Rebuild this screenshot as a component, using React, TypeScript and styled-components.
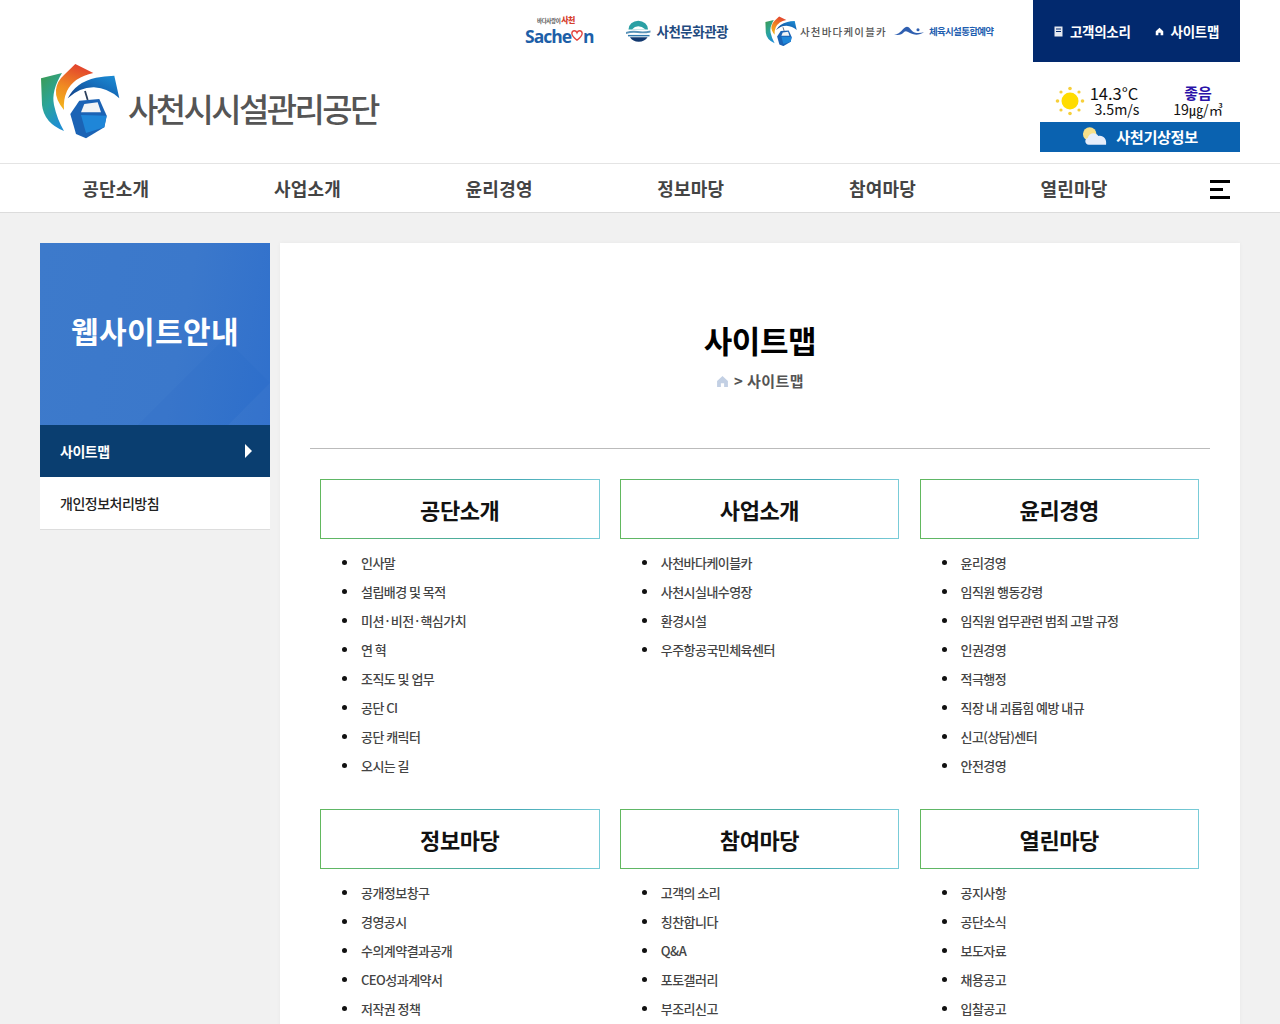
import React from "react";
import styled, {createGlobalStyle} from "styled-components";

const GlobalStyle = createGlobalStyle`
  html, body {
    margin: 0;
    padding: 0;
    height: 1024px;
    overflow: hidden;
    background: #f1f1f1;
    font-family: "Noto Sans CJK KR", "Noto Sans", sans-serif;
  }
  * { box-sizing: border-box; }
  ul { list-style: none; margin: 0; padding: 0; }
`

const Header = styled.header`
  background: #fff;
  height: 163px;`
const TopRow = styled.div`
  display: flex;
  justify-content: flex-end;
  align-items: stretch;
  height: 62px;
  padding-right: 40px;`
const TopLink = styled.a<{ $gap: number, $width: number }>`
  display: flex;
  align-items: center;
  width: ${p => p.$width}px;
  margin-right: ${p => p.$gap}px;
  white-space: nowrap;`
const SachonMark = styled.div`
  position: relative;
  font-family: "Open Sans", sans-serif;
  font-size: 17.5px;
  font-weight: 700;
  letter-spacing: -1px;
  color: #1d5fa8;
  display: flex;
  align-items: center;
  padding-top: 9px;`
const SachonTag = styled.span`
  position: absolute;
  top: -1px;
  left: 12px;
  font-family: "Noto Sans CJK KR", sans-serif;
  font-size: 5.5px;
  letter-spacing: -0.4px;
  color: #555;
  b { color: #d6402c; font-size: 8px; }`
const CultureText = styled.span`
  font-size: 13.5px;
  font-weight: 700;
  letter-spacing: -0.5px;
  color: #1f4a80;
  margin-left: 5px;`
const CableText = styled.span`
  font-size: 10.5px;
  font-weight: 500;
  letter-spacing: 1.2px;
  color: #555;
  margin-left: 3px;`
const SportsText = styled.span`
  font-size: 9.5px;
  font-weight: 700;
  letter-spacing: -0.7px;
  color: #1e5eb0;
  margin-left: 4px;`
const QuickBox = styled.div`
  display: flex;
  align-items: center;
  width: 207px;
  padding: 0 0 0 21px;
  background: #02296e;`
const QuickLink = styled.a<{ $gap: number }>`
  display: flex;
  align-items: center;
  gap: 7px;
  margin-right: ${p => p.$gap}px;
  color: #fff;
  font-size: 13.5px;
  font-weight: 700;
  letter-spacing: -0.3px;
  white-space: nowrap;`

const LogoRow = styled.div`
  display: flex;
  justify-content: space-between;
  align-items: flex-end;
  height: 101px;
  padding: 0 40px 11px;`
const Logo = styled.a`
  display: flex;
  align-items: center;
  gap: 8px;
  margin-bottom: 13px;`
const LogoText = styled.span`
  margin-top: 14px;
  font-size: 33px;
  line-height: 44px;
  font-weight: 500;
  letter-spacing: -2.6px;
  color: #555;
  white-space: nowrap;`
const Weather = styled.div`
  width: 200px;`
const WeatherInfo = styled.div`
  display: flex;
  align-items: center;
  height: 37px;
  padding: 0 0 6px 15px;`
const Readings = styled.div<{ $width: number, $left?: number }>`
  display: flex;
  flex-direction: column;
  align-items: center;
  width: ${p => p.$width}px;
  margin-left: ${p => p.$left || 0}px;
  color: #111;
  line-height: 16px;`
const Temp = styled.span`
  font-size: 16.5px;
  margin-left: -2px;`
const Sub = styled.span<{ $shift?: number }>`
  font-size: 14.2px;
  margin-left: ${p => p.$shift || 0}px;
  white-space: nowrap;`
const Good = styled.span`
  font-size: 15px;
  font-weight: 700;
  color: #2a12a8;`
const WeatherBar = styled.a`
  display: flex;
  align-items: center;
  justify-content: center;
  gap: 8px;
  height: 30px;
  padding-bottom: 3px;
  background: #0a62b0;
  color: #fff;
  font-size: 15.2px;
  font-weight: 700;
  letter-spacing: -0.4px;`

const Nav = styled.nav`
  position: relative;
  display: flex;
  height: 50px;
  padding-left: 20px;
  background: #fff;
  border-top: 1px solid #e4e4e4;
  border-bottom: 1px solid #dcdcdc;`
const NavItem = styled.a`
  width: 191.67px;
  text-align: center;
  line-height: 48px;
  font-size: 18px;
  font-weight: 700;
  letter-spacing: 0.2px;
  color: #444;`
const MenuButton = styled.button`
  position: absolute;
  top: 16px;
  right: 50px;
  display: flex;
  flex-direction: column;
  gap: 5px;
  width: 20px;
  padding: 0;
  border: 0;
  background: none;`
const MenuLine = styled.i<{ $short?: boolean }>`
  display: block;
  height: 3px;
  width: ${p => p.$short ? 13 : 20}px;
  background: #000;`

const Body = styled.div`
  display: flex;
  gap: 10px;
  padding: 30px 40px 0;`
const Side = styled.aside`
  width: 230px;
  flex: none;`
const SideTitle = styled.div`
  position: relative;
  overflow: hidden;
  display: flex;
  align-items: center;
  justify-content: center;
  height: 182px;
  padding-bottom: 8px;
  background: linear-gradient(100deg, #3d7acb 0%, #3b78cb 60%, #3070cc 100%);
  color: #fff;
  font-size: 30px;
  font-weight: 700;
  letter-spacing: 0.4px;`
const SideShape = styled.i<{ $right: number, $bottom: number, $tone: string }>`
  position: absolute;
  right: ${p => p.$right}px;
  bottom: ${p => p.$bottom}px;
  width: 130px;
  height: 130px;
  transform: rotate(45deg);
  background: ${p => p.$tone};`
const SideLabel = styled.span`
  position: relative;`
const SideActive = styled.a`
  display: flex;
  align-items: center;
  justify-content: space-between;
  height: 52px;
  padding: 0 18px 0 20px;
  background: #0a3e70;
  color: #fff;
  font-size: 14px;
  font-weight: 700;
  letter-spacing: -0.5px;`
const Arrow = styled.i`
  width: 0;
  height: 0;
  border-left: 7px solid #fff;
  border-top: 7px solid transparent;
  border-bottom: 7px solid transparent;`
const SideLink = styled.a`
  display: flex;
  align-items: center;
  height: 53px;
  padding: 0 0 1px 20px;
  background: #fff;
  border-bottom: 1px solid #ddd;
  color: #222;
  font-size: 14px;
  font-weight: 500;
  letter-spacing: -0.5px;`

const Main = styled.main`
  width: 960px;
  padding: 0 30px 60px;
  background: #fff;
  box-shadow: 0 0 4px rgba(0, 0, 0, 0.04);`
const PageHead = styled.div`
  height: 206px;
  padding-top: 72px;
  border-bottom: 1px solid #bbb;
  text-align: center;`
const PageTitle = styled.h1`
  margin: 0;
  font-size: 31px;
  line-height: 50px;
  font-weight: 700;
  letter-spacing: -0.4px;
  color: #000;`
const Crumb = styled.div`
  display: flex;
  align-items: center;
  justify-content: center;
  gap: 5px;
  margin-top: 6px;
  font-size: 15px;
  line-height: 20px;
  font-weight: 700;
  color: #555;
  letter-spacing: 0.4px;`
const Grid = styled.div`
  display: grid;
  grid-template-columns: repeat(3, 1fr);
  column-gap: 20.25px;
  row-gap: 27.75px;
  width: 879px;
  margin: 30px 0 0 10px;`
const BoxTitle = styled.h2`
  margin: 0;
  height: 60px;
  border: 1px solid;
  border-image: linear-gradient(to right, #62b85e, #45a9b5 70%, #7accd8) 1;
  text-align: center;
  font-size: 22px;
  line-height: 58px;
  font-weight: 700;
  letter-spacing: -0.4px;
  color: #111;`
const Links = styled.ul`
  padding: 10.25px 0 0 22px;`
const LinkItem = styled.li`
  position: relative;
  height: 29px;
  padding-left: 19px;
  font-size: 13px;
  line-height: 28px;
  font-weight: 500;
  letter-spacing: -0.55px;
  color: #444;
  white-space: nowrap;
  &::before {
    content: "";
    position: absolute;
    left: 0;
    top: 11px;
    width: 5px;
    height: 5px;
    border-radius: 50%;
    background: #111;
  }`

const sections = [
    {title: "공단소개", items: ["인사말", "설립배경 및 목적", "미션·비전·핵심가치", "연 혁", "조직도 및 업무", "공단 CI", "공단 캐릭터", "오시는 길"]},
    {title: "사업소개", items: ["사천바다케이블카", "사천시실내수영장", "환경시설", "우주항공국민체육센터"]},
    {title: "윤리경영", items: ["윤리경영", "임직원 행동강령", "임직원 업무관련 범죄 고발 규정", "인권경영", "적극행정", "직장 내 괴롭힘 예방 내규", "신고(상담)센터", "안전경영"]},
    {title: "정보마당", items: ["공개정보창구", "경영공시", "수의계약결과공개", "CEO성과계약서", "저작권 정책"]},
    {title: "참여마당", items: ["고객의 소리", "칭찬합니다", "Q&A", "포토갤러리", "부조리신고"]},
    {title: "열린마당", items: ["공지사항", "공단소식", "보도자료", "채용공고", "입찰공고"]},
]

const navItems = ["공단소개", "사업소개", "윤리경영", "정보마당", "참여마당", "열린마당"]

const BrandMark = ({size, id}: { size: number, id: string }) => (
    <svg width={size} height={size * 76 / 80} viewBox="0 0 80 76">
        <defs>
            <linearGradient id={id + "G"} x1="0" y1="0" x2="0.5" y2="1">
                <stop offset="0" stopColor="#3d9a4e"/>
                <stop offset="0.55" stopColor="#2ba59a"/>
                <stop offset="1" stopColor="#1f8fd0"/>
            </linearGradient>
            <linearGradient id={id + "O"} x1="0.6" y1="0" x2="0.3" y2="1">
                <stop offset="0" stopColor="#e2402e"/>
                <stop offset="0.55" stopColor="#f08a22"/>
                <stop offset="1" stopColor="#f3b21c"/>
            </linearGradient>
            <linearGradient id={id + "B"} x1="0" y1="1" x2="1" y2="0">
                <stop offset="0" stopColor="#123f86"/>
                <stop offset="0.6" stopColor="#1670bd"/>
                <stop offset="1" stopColor="#1c8fd6"/>
            </linearGradient>
        </defs>
        <path d="M1 15.300 22 10Q11 28 14 42 17 56 24 68 4 60 2 42Z" fill={`url(#${id}G)`}/>
        <path d="M35.300 1 53.300 10Q34 14 27 28 23 37 24 47 15 36 16 27 17 18 24 12Z" fill={`url(#${id}O)`}/>
        <path d="M27.700 35.300Q36 19 56 14.700 64 13 74.300 12.700L79.300 35.300Q68 25 54 24.300 40 24 27.700 35.300Z" fill={`url(#${id}B)`}/>
        <path d="M45 28 47.700 37" stroke="#2b3f5c" strokeWidth="1.800" fill="none"/>
        <path d="M39.300 37.700 59.300 36 66.700 52.700 64.300 64.300 46 75.300 36 71 30.300 51Z" fill="#1b63b5"/>
        <path d="M44.300 41 57.700 39.300 61 49.300 41 49.300Z" fill="#f2f4f6"/>
        <path d="M41 52 66.700 52.700 64.300 64.300 46 70Z" fill="#1f86d8"/>
    </svg>
)

const WaveMark = () => (
    <svg width="26" height="22" viewBox="0 0 26 22">
        <path d="M2.500 9.500A10 9 0 0 1 22.500 9.500Z" fill="#2aa0a4"/>
        <path d="M6 9.500Q12 3 20 9.500Z" fill="#fff"/>
        <path d="M0 12Q6 10 12 11 18 12 25 10.500V12.500Q18 14 12 13 6 12 0 14Z" fill="#5b93b8"/>
        <path d="M2 15H24V16.500H2Z" fill="#2f78ad"/>
        <path d="M4 17.500H22Q19 22 13 22 7 22 4 17.500Z" fill="#12386f"/>
    </svg>
)

const SwimMark = () => (
    <svg width="32" height="12" viewBox="0 0 35 14">
        <path d="M0 11C8 11 10 3 15 2 19 2 20 8 25 9 29 9.500 32 9 35 8.500 30 12 24 12 20 10 16 8 14 6 12 8 9 12 4 12 0 11Z" fill="#2f5fb0"/>
        <circle cx="28" cy="5.500" r="1.800" fill="#2f5fb0"/>
    </svg>
)

const Heart = () => (
    <svg width="12" height="13" viewBox="0 0 14 14">
        <path d="M7 12.500C3 9.500 1 7.500 1 4.800 1 2.800 2.500 1.500 4 1.500 5.500 1.500 6.500 2.500 7 3.800 7.500 2.500 8.500 1.500 10 1.500 11.500 1.500 13 2.800 13 4.800 13 7.500 11 9.500 7 12.500Z" fill="none" stroke="#e2453f" strokeWidth="1.600"/>
    </svg>
)

const BookIcon = () => (
    <svg width="9" height="11" viewBox="0 0 9 11">
        <rect x="0.500" y="0.500" width="8" height="10" fill="#e6e9f0"/>
        <path d="M2 3H7M2 5.500H7" stroke="#02296e" strokeWidth="1"/>
    </svg>
)

const HouseIcon = ({size, color}: { size: number, color: string }) => (
    <svg width={size} height={size} viewBox="0 0 12 12">
        <path d="M6 1 1 5.500V11H4.500V7.500H7.500V11H11V5.500Z" fill={color}/>
    </svg>
)

const SunIcon = () => (
    <svg width="30" height="30" viewBox="0 0 30 30">
        <g fill="#f6cf3a">
            <circle cx="15" cy="2.500" r="1.800"/>
            <circle cx="15" cy="27.500" r="1.800"/>
            <circle cx="2.500" cy="15" r="1.800"/>
            <circle cx="27.500" cy="15" r="1.800"/>
            <circle cx="6" cy="6" r="1.600"/>
            <circle cx="24" cy="6" r="1.600"/>
            <circle cx="6" cy="24" r="1.600"/>
            <circle cx="24" cy="24" r="1.600"/>
        </g>
        <circle cx="15" cy="15" r="8.500" fill="#ffdc00"/>
    </svg>
)

const CloudIcon = () => (
    <svg width="26" height="20" viewBox="0 0 27 20">
        <circle cx="8" cy="8" r="7" fill="#f7e08a"/>
        <path d="M7 19C3 19 2 13 6 12 7 7 14 5 17 10 22 9 26 13 25 19Z" fill="#e6edfa"/>
    </svg>
)

const App = () => {
    return (
        <>
            <GlobalStyle/>
            <Header>
                <TopRow>
                    <TopLink $width={69} $gap={32}>
                        <SachonMark>
                            <SachonTag>바다사랑이 <b>사천</b></SachonTag>
                            Sache<Heart/>n
                        </SachonMark>
                    </TopLink>
                    <TopLink $width={102} $gap={37}>
                        <WaveMark/>
                        <CultureText>사천문화관광</CultureText>
                    </TopLink>
                    <TopLink $width={123} $gap={5}>
                        <BrandMark size={32} id="small"/>
                        <CableText>사천바다케이블카</CableText>
                    </TopLink>
                    <TopLink $width={103} $gap={37}>
                        <SwimMark/>
                        <SportsText>체육시설통합예약</SportsText>
                    </TopLink>
                    <QuickBox>
                        <QuickLink $gap={24}><BookIcon/>고객의소리</QuickLink>
                        <QuickLink $gap={0}><HouseIcon size={9} color="#fff"/>사이트맵</QuickLink>
                    </QuickBox>
                </TopRow>
                <LogoRow>
                    <Logo>
                        <BrandMark size={80} id="big"/>
                        <LogoText>사천시시설관리공단</LogoText>
                    </Logo>
                    <Weather>
                        <WeatherInfo>
                            <SunIcon/>
                            <Readings $width={60}>
                                <Temp>14.3°C</Temp>
                                <Sub $shift={4}>3.5m/s</Sub>
                            </Readings>
                            <Readings $width={76} $left={15}>
                                <Good>좋음</Good>
                                <Sub>19㎍/㎥</Sub>
                            </Readings>
                        </WeatherInfo>
                        <WeatherBar><CloudIcon/>사천기상정보</WeatherBar>
                    </Weather>
                </LogoRow>
            </Header>
            <Nav>
                {navItems.map(n => <NavItem key={n}>{n}</NavItem>)}
                <MenuButton>
                    <MenuLine/>
                    <MenuLine $short/>
                    <MenuLine/>
                </MenuButton>
            </Nav>
            <Body>
                <Side>
                    <SideTitle>
                        <SideShape $right={-20} $bottom={-70} $tone="rgba(30, 100, 200, 0.1)"/>
                        <SideShape $right={-90} $bottom={-90} $tone="rgba(255, 255, 255, 0.03)"/>
                        <SideLabel>웹사이트안내</SideLabel>
                    </SideTitle>
                    <SideActive>사이트맵<Arrow/></SideActive>
                    <SideLink>개인정보처리방침</SideLink>
                </Side>
                <Main>
                    <PageHead>
                        <PageTitle>사이트맵</PageTitle>
                        <Crumb><HouseIcon size={13} color="#c3d0e4"/>&gt; 사이트맵</Crumb>
                    </PageHead>
                    <Grid>
                        {sections.map(s => (
                            <section key={s.title}>
                                <BoxTitle>{s.title}</BoxTitle>
                                <Links>
                                    {s.items.map(i => <LinkItem key={i}>{i}</LinkItem>)}
                                </Links>
                            </section>
                        ))}
                    </Grid>
                </Main>
            </Body>
        </>
    )
}

export default App
